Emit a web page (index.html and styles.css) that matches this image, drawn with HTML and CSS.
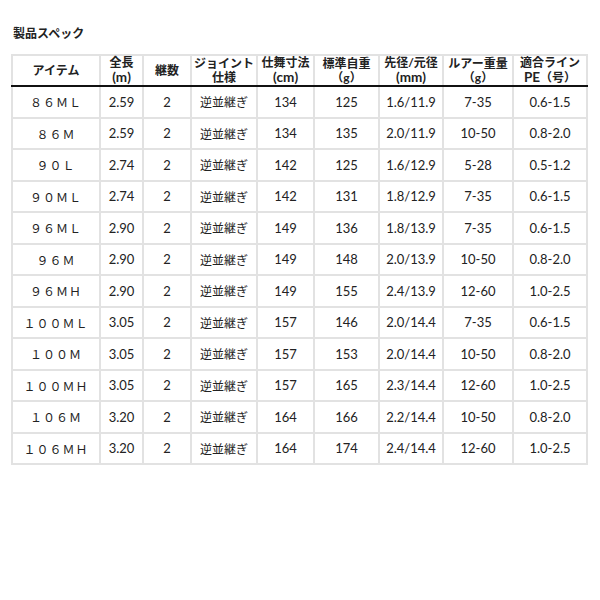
FILE: index.html
```html
<!DOCTYPE html>
<html lang="ja">
<head>
<meta charset="utf-8">
<link rel="stylesheet" href="styles.css">
</head>
<body>
<h2 class="title">製品スペック</h2>
<table class="spec">
  <colgroup>
    <col class="c1"><col class="c2"><col class="c3"><col class="c4"><col class="c5"><col class="c6"><col class="c7"><col class="c8"><col class="c9">
  </colgroup>
  <thead>
    <tr>
      <th>アイテム</th>
      <th>全長<br><span class="unit">(m)</span></th>
      <th>継数</th>
      <th>ジョイント<br>仕様</th>
      <th>仕舞寸法<br><span class="unit">(cm)</span></th>
      <th>標準自重<br>（g）</th>
      <th>先径/元径<br><span class="unit">(mm)</span></th>
      <th>ルアー重量<br>（g）</th>
      <th>適合ライン<br><span class="unit">PE</span>（号）</th>
    </tr>
  </thead>
  <tbody>
    <tr><td class="name">８６ＭＬ</td><td>2.59</td><td>2</td><td>逆並継ぎ</td><td>134</td><td>125</td><td>1.6/11.9</td><td>7-35</td><td>0.6-1.5</td></tr>
    <tr><td class="name">８６Ｍ</td><td>2.59</td><td>2</td><td>逆並継ぎ</td><td>134</td><td>135</td><td>2.0/11.9</td><td>10-50</td><td>0.8-2.0</td></tr>
    <tr><td class="name">９０Ｌ</td><td>2.74</td><td>2</td><td>逆並継ぎ</td><td>142</td><td>125</td><td>1.6/12.9</td><td>5-28</td><td>0.5-1.2</td></tr>
    <tr><td class="name">９０ＭＬ</td><td>2.74</td><td>2</td><td>逆並継ぎ</td><td>142</td><td>131</td><td>1.8/12.9</td><td>7-35</td><td>0.6-1.5</td></tr>
    <tr><td class="name">９６ＭＬ</td><td>2.90</td><td>2</td><td>逆並継ぎ</td><td>149</td><td>136</td><td>1.8/13.9</td><td>7-35</td><td>0.6-1.5</td></tr>
    <tr><td class="name">９６Ｍ</td><td>2.90</td><td>2</td><td>逆並継ぎ</td><td>149</td><td>148</td><td>2.0/13.9</td><td>10-50</td><td>0.8-2.0</td></tr>
    <tr><td class="name">９６ＭＨ</td><td>2.90</td><td>2</td><td>逆並継ぎ</td><td>149</td><td>155</td><td>2.4/13.9</td><td>12-60</td><td>1.0-2.5</td></tr>
    <tr><td class="name">１００ＭＬ</td><td>3.05</td><td>2</td><td>逆並継ぎ</td><td>157</td><td>146</td><td>2.0/14.4</td><td>7-35</td><td>0.6-1.5</td></tr>
    <tr><td class="name">１００Ｍ</td><td>3.05</td><td>2</td><td>逆並継ぎ</td><td>157</td><td>153</td><td>2.0/14.4</td><td>10-50</td><td>0.8-2.0</td></tr>
    <tr><td class="name">１００ＭＨ</td><td>3.05</td><td>2</td><td>逆並継ぎ</td><td>157</td><td>165</td><td>2.3/14.4</td><td>12-60</td><td>1.0-2.5</td></tr>
    <tr><td class="name">１０６Ｍ</td><td>3.20</td><td>2</td><td>逆並継ぎ</td><td>164</td><td>166</td><td>2.2/14.4</td><td>10-50</td><td>0.8-2.0</td></tr>
    <tr><td class="name">１０６ＭＨ</td><td>3.20</td><td>2</td><td>逆並継ぎ</td><td>164</td><td>174</td><td>2.4/14.4</td><td>12-60</td><td>1.0-2.5</td></tr>
  </tbody>
</table>
</body>
</html>
```
FILE: styles.css
```css
html, body {
  margin: 0;
  padding: 0;
  background: #fff;
}
body {
  padding: 0 0 0 11px;
  font-family: "Lato", "Noto Sans CJK JP", sans-serif;
  color: #222;
}
.title {
  margin: 0;
  padding: 24px 0 0 2px;
  height: 30px;
  box-sizing: border-box;
  font-family: "Noto Sans CJK JP", sans-serif;
  font-size: 12px;
  line-height: 18px;
  font-weight: 700;
  color: #222;
  letter-spacing: 0;
}
.spec {
  margin-top: 24px;
  border-collapse: collapse;
  table-layout: fixed;
  width: 575px;
  font-size: 13px;
}
.c1 { width: 88px; }
.c2 { width: 43px; }
.c3 { width: 48px; }
.c4 { width: 66px; }
.c5 { width: 57px; }
.c6 { width: 65px; }
.c7 { width: 64px; }
.c8 { width: 70px; }
.c9 { width: 74px; }
.spec th, .spec td {
  border: 2px solid #e2e2e2;
  text-align: center;
  padding: 0;
}
.spec th {
  height: 28px;
  font-family: "Lato", "Noto Sans CJK JP", sans-serif;
  font-size: 12px;
  line-height: 14px;
  font-weight: 700;
  border-bottom: 2px solid #111;
  color: #222;
}
.spec th .unit {
  font-size: 13.5px;
}
.spec td {
  height: 29.5px;
  color: #222;
}
.spec td.name {
  font-family: "Noto Sans CJK JP", sans-serif;
  font-size: 12px;
  letter-spacing: 1px;
}
.spec td:nth-child(4) {
  font-family: "Noto Sans CJK JP", sans-serif;
  font-size: 12px;
}
```
